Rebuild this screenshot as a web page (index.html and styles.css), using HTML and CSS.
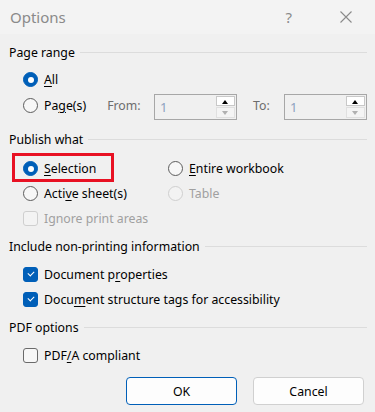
FILE: index.html
```html
<!DOCTYPE html>
<html lang="en">
<head>
    <title>Options</title>
    <link rel="stylesheet" href="styles.css">
</head>
<body>

    <div class="dialog">
        <div class="titlebar">
            <span class="title">Options</span>
            <span class="help">?</span>
            <svg class="close" width="12" height="12" viewBox="0 0 12 12">
                <path d="M0.5 0.5 L11.5 11.5 M11.5 0.5 L0.5 11.5" stroke="#8a8a8a" stroke-width="1.1" fill="none"/>
            </svg>
        </div>

        <div class="content">
            <div class="group-head first"><span>Page range</span><i class="rule"></i></div>
            <div class="row">
                <label class="item"><span class="radio on"></span><u>A</u>ll</label>
            </div>
            <div class="row pages">
                <label class="item"><span class="radio"></span>Pa<u>g</u>e(s)</label>
                <span class="dim from">From:</span>
                <div class="spin">
                    <span class="val">1</span>
                    <div class="arrows">
                        <span class="up"></span>
                        <span class="down"></span>
                    </div>
                </div>
                <span class="dim to">To:</span>
                <div class="spin">
                    <span class="val">1</span>
                    <div class="arrows">
                        <span class="up"></span>
                        <span class="down"></span>
                    </div>
                </div>
            </div>

            <div class="group-head publish"><span>Publish what</span><i class="rule"></i></div>
            <div class="grid">
                <label class="item marked"><span class="radio on"></span><u>S</u>election</label>
                <label class="item"><span class="radio"></span><u>E</u>ntire workbook</label>
                <label class="item"><span class="radio"></span>Acti<u>v</u>e sheet(s)</label>
                <label class="item off"><span class="radio"></span>Table</label>
                <label class="item off"><span class="check"></span>Ignore print areas</label>
            </div>

            <div class="group-head">
                <span>Include non-printing information</span><i class="rule"></i>
            </div>
            <div class="row">
                <label class="item"><span class="check on"></span>Document p<u>r</u>operties</label>
            </div>
            <div class="row">
                <label class="item"><span class="check on"></span>Docu<u>m</u>ent structure tags for accessibility</label>
            </div>

            <div class="group-head"><span>PDF options</span><i class="rule"></i></div>
            <div class="row pdfa">
                <label class="item"><span class="check"></span>PDF<u>/</u>A compliant</label>
            </div>

            <div class="buttons">
                <button class="default">OK</button>
                <button>Cancel</button>
            </div>
        </div>
    </div>

</body>
</html>
```

FILE: styles.css
```css
body {
    margin: 0;
    background: #f0f0f0;
    font-family: "Noto Sans", "Liberation Sans", sans-serif;
    font-size: 12.3px;
    color: #000;
}
.dialog {
    width: 375px;
    height: 412px;
    overflow: hidden;
}
.titlebar {
    height: 34px;
    background: #f3f3f3;
    display: flex;
    align-items: center;
    padding-left: 10px;
}
.title {
    font-size: 15px;
    color: #8a8a8a;
    flex: 1;
}
.help {
    font-size: 15px;
    color: #8a8a8a;
    margin-right: 48px;
}
.close {
    margin-right: 23px;
}
.content {
    padding: 0 8px 0 9px;
}
.group-head {
    display: flex;
    align-items: center;
    height: 16px;
    line-height: 16px;
    margin-top: 8px;
}
.group-head.first {
    margin-top: 11px;
}
.group-head.publish {
    margin-top: 13px;
}
.rule {
    flex: 1;
    height: 1px;
    background: #dcdcdc;
    margin-left: 5px;
    margin-top: -1px;
}
.row {
    display: flex;
    align-items: center;
    height: 25px;
    padding-left: 14px;
}
.group-head + .row {
    margin-top: 7px;
}
.group-head.first + .row {
    margin-top: 6px;
}
.row.pages {
    height: 27px;
}
.item {
    display: flex;
    align-items: center;
    height: 25px;
    position: relative;
}
.item u {
    text-decoration-thickness: 1px;
    text-underline-offset: 2px;
}
.radio {
    width: 13px;
    height: 13px;
    border: 1px solid #5c5c5c;
    border-radius: 50%;
    background: #f7f7f7;
    margin-right: 6px;
    box-sizing: content-box;
    position: relative;
}
.radio.on {
    background: #005fb8;
    border-color: #005fb8;
}
.radio.on::after {
    content: "";
    position: absolute;
    left: 3.5px;
    top: 3.5px;
    width: 6px;
    height: 6px;
    border-radius: 50%;
    background: #fff;
}
.check {
    width: 13px;
    height: 13px;
    border: 1px solid #6a6a6a;
    border-radius: 3px;
    background: #f7f7f7;
    margin-right: 6px;
    position: relative;
}
.check.on {
    background: #005fb8;
    border-color: #005fb8;
}
.check.on::after {
    content: "";
    position: absolute;
    left: 4px;
    top: 3px;
    width: 5px;
    height: 3px;
    border-left: 1px solid #fff;
    border-bottom: 1px solid #fff;
    transform: rotate(-45deg);
}
.off {
    color: #a0a0a0;
}
.off .radio, .off .check {
    border-color: #cfcfcf;
    background: #f3f3f3;
}
.dim {
    color: #6d6d6d;
}
.from {
    margin-left: 21px;
    width: 47px;
}
.to {
    margin-left: 16px;
    width: 31px;
}
.spin {
    width: 81px;
    height: 24px;
    border: 1px solid #a7a7a7;
    display: flex;
    background: #f0f0f0;
    margin-top: 2px;
}
.val {
    flex: 1;
    padding-left: 5px;
    line-height: 24px;
    color: #8da0c0;
    font-size: 13px;
}
.arrows {
    width: 19px;
    display: flex;
    flex-direction: column;
    padding: 1px 1px 1px 0;
}
.up, .down {
    flex: 1;
    border: 1px solid #c8c8c8;
    position: relative;
}
.up {
    background: #fff;
    margin-bottom: 1px;
}
.down {
    background: #f4f4f4;
    border-color: #e0e0e0;
}
.up::after, .down::after {
    content: "";
    position: absolute;
    left: 5px;
    top: 3px;
    border-left: 3.5px solid transparent;
    border-right: 3.5px solid transparent;
}
.up::after {
    border-bottom: 4px solid #000;
}
.down::after {
    border-top: 4px solid #b0b0b0;
}
.grid {
    display: grid;
    grid-template-columns: 145px auto;
    grid-auto-rows: 25px;
    padding-left: 14px;
    margin-top: 8px;
}
.marked::before {
    content: "";
    position: absolute;
    left: -11px;
    top: -3px;
    width: 96px;
    height: 23px;
    border: 3px solid #e81123;
}
.row.pdfa {
    margin-top: 7px;
}
.buttons {
    display: flex;
    justify-content: flex-end;
    gap: 16px;
    margin-top: 9px;
    padding-right: 3px;
}
button {
    width: 111px;
    height: 28px;
    background: #fdfdfd;
    border: 1px solid #d0d0d0;
    border-radius: 4px;
    font-family: inherit;
    font-size: 12.3px;
    color: #000;
}
button.default {
    border-color: #005fb8;
}
```
